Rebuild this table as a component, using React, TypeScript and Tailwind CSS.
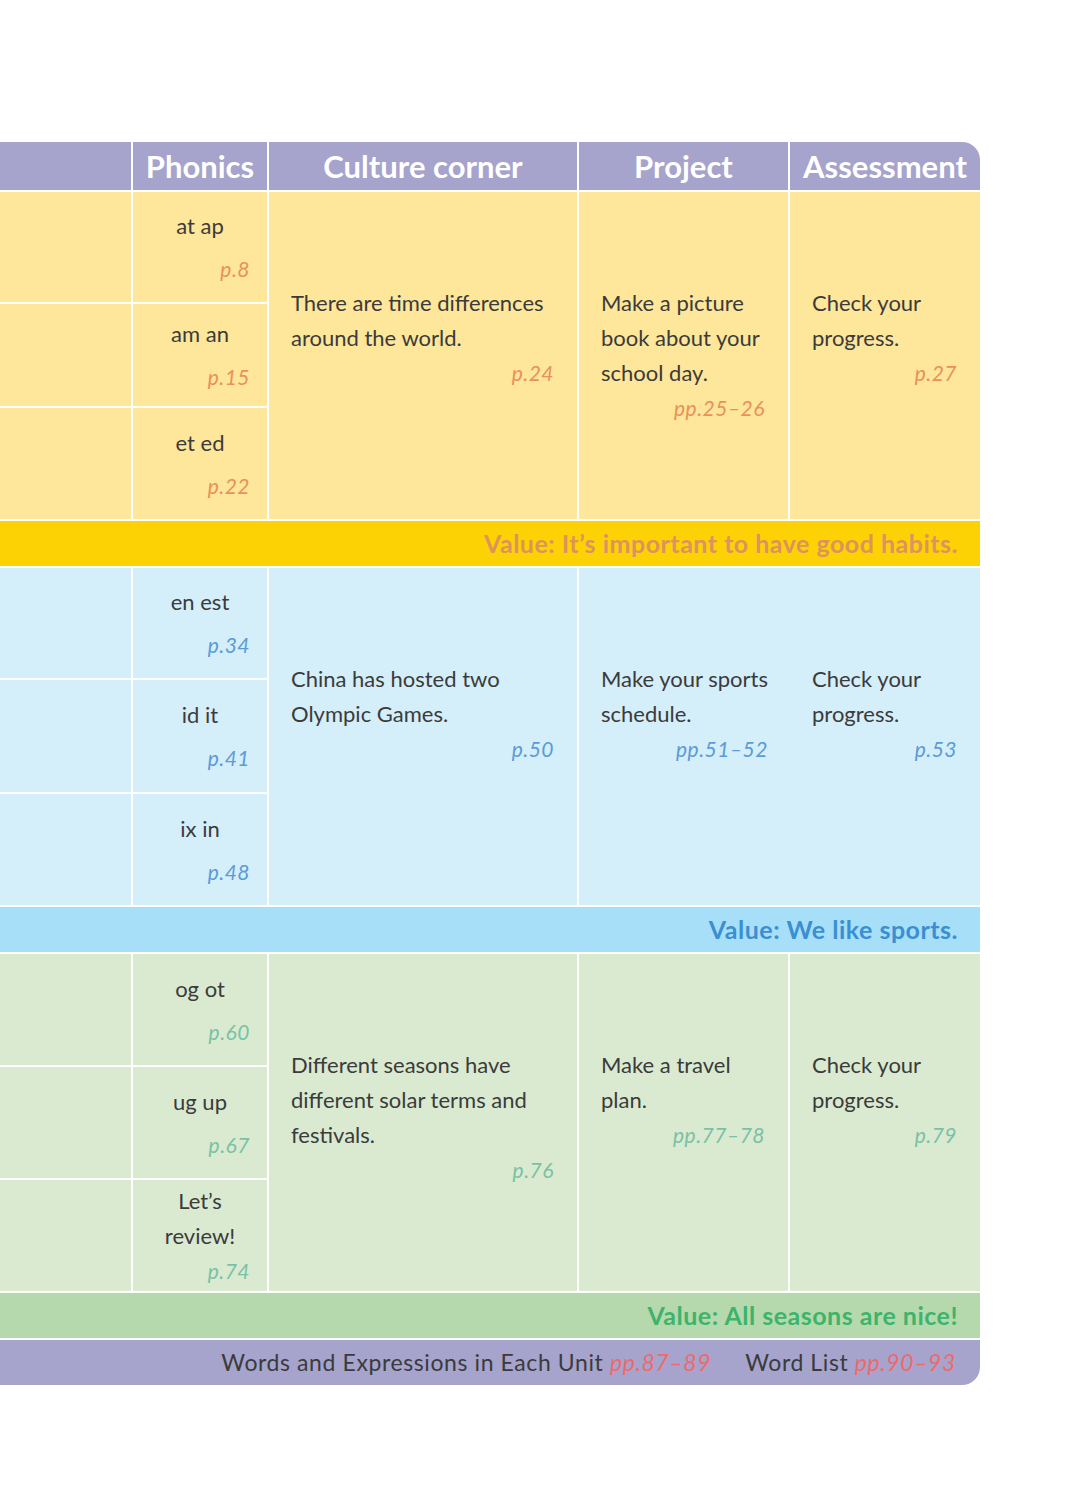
import React from 'react';

// Unit overview table: phonics, culture corner, project, assessment

type Phonic = { words: string[]; page: string };
type Block = { lines: string[]; page: string };

interface Section {
  cellBg: string;
  barBg: string;
  refColor: string;
  valueColor: string;
  rows: string;
  phonics: Phonic[];
  culture: Block;
  project: Block;
  assessment: Block;
  value: string;
}

const sections: Section[] = [
  {
    cellBg: 'bg-[#fee69a]',
    barBg: 'bg-[#fdd205]',
    refColor: 'text-[#e9915a]',
    valueColor: 'text-[#dc945c]',
    rows: 'grid-rows-[110px_102px_111px]',
    phonics: [
      { words: ['at ap'], page: 'p.8' },
      { words: ['am an'], page: 'p.15' },
      { words: ['et ed'], page: 'p.22' },
    ],
    culture: { lines: ['There are time differences', 'around the world.'], page: 'p.24' },
    project: { lines: ['Make a picture', 'book about your', 'school day.'], page: 'pp.25–26' },
    assessment: { lines: ['Check your', 'progress.'], page: 'p.27' },
    value: 'Value: It’s important to have good habits.',
  },
  {
    cellBg: 'bg-[#d4eefa]',
    barBg: 'bg-[#a8dff8]',
    refColor: 'text-[#5b9bd8]',
    valueColor: 'text-[#3a8fd2]',
    rows: 'grid-rows-[110px_112px_111px]',
    phonics: [
      { words: ['en est'], page: 'p.34' },
      { words: ['id it'], page: 'p.41' },
      { words: ['ix in'], page: 'p.48' },
    ],
    culture: { lines: ['China has hosted two', 'Olympic Games.'], page: 'p.50' },
    project: { lines: ['Make your sports', 'schedule.'], page: 'pp.51–52' },
    assessment: { lines: ['Check your', 'progress.'], page: 'p.53' },
    value: 'Value: We like sports.',
  },
  {
    cellBg: 'bg-[#d9ead1]',
    barBg: 'bg-[#b5d9ad]',
    refColor: 'text-[#79c1a5]',
    valueColor: 'text-[#3cb46c]',
    rows: 'grid-rows-[111px_111px_111px]',
    phonics: [
      { words: ['og ot'], page: 'p.60' },
      { words: ['ug up'], page: 'p.67' },
      { words: ['Let’s', 'review!'], page: 'p.74' },
    ],
    culture: {
      lines: ['Different seasons have', 'different solar terms and', 'festivals.'],
      page: 'p.76',
    },
    project: { lines: ['Make a travel', 'plan.'], page: 'pp.77–78' },
    assessment: { lines: ['Check your', 'progress.'], page: 'p.79' },
    value: 'Value: All seasons are nice!',
  },
];

const cols = 'grid grid-cols-[131px_134px_308px_209px_190px] gap-[2px]';
const refText = 'text-[21px] italic tracking-[0.5px]';

function TextCell({ block, bg, refColor }: { block: Block; bg: string; refColor: string }) {
  return (
    <div className={`${bg} row-span-3 pl-[22px] pr-[23px] pt-[93px] text-[22px] leading-[35px] text-[#3b3b3b]`}>
      {block.lines.map((l) => (
        <div key={l} className="whitespace-nowrap">
          {l}
        </div>
      ))}
      <div className={`text-right ${refText} ${refColor}`}>{block.page}</div>
    </div>
  );
}

export default function App() {
  return (
    <div className="min-h-screen bg-white pt-[142px] font-['Lato',sans-serif]">
      <div className="flex w-[980px] flex-col gap-[2px]">
        {/* Header */}
        <div className={`${cols} h-[48px]`}>
          <div className="bg-[#a6a3cc]" />
          {['Phonics', 'Culture corner', 'Project', 'Assessment'].map((h, i) => (
            <div
              key={h}
              className={`flex items-center justify-center bg-[#a6a3cc] text-[31px] font-bold text-white ${
                i === 3 ? 'rounded-tr-[18px]' : ''
              }`}
            >
              {h}
            </div>
          ))}
        </div>

        {sections.map((s) => (
          <React.Fragment key={s.value}>
            <div className={`${cols} ${s.rows}`}>
              {s.phonics.map((p, i) => (
                <React.Fragment key={p.page}>
                  <div className={`${s.cellBg} col-start-1`} style={{ gridRow: i + 1 }} />
                  <div
                    className={`${s.cellBg} col-start-2 flex flex-col justify-center text-[22px] leading-[35px] text-[#3b3b3b]`}
                    style={{ gridRow: i + 1 }}
                  >
                    {p.words.map((w) => (
                      <div key={w} className="text-center">
                        {w}
                      </div>
                    ))}
                    <div
                      className={`pr-[17px] text-right ${refText} ${s.refColor} ${
                        p.words.length === 1 ? 'mt-[8px]' : ''
                      }`}
                    >
                      {p.page}
                    </div>
                  </div>
                </React.Fragment>
              ))}
              <div className="col-start-3 row-span-3 row-start-1 grid">
                <TextCell block={s.culture} bg={s.cellBg} refColor={s.refColor} />
              </div>
              <div className="col-start-4 row-span-3 row-start-1 grid">
                <TextCell block={s.project} bg={s.cellBg} refColor={s.refColor} />
              </div>
              <div className="col-start-5 row-span-3 row-start-1 grid">
                <TextCell block={s.assessment} bg={s.cellBg} refColor={s.refColor} />
              </div>
            </div>
            <div
              className={`${s.barBg} flex h-[45px] items-center justify-end pr-[22px] text-[25px] font-bold tracking-[0.5px] ${s.valueColor}`}
            >
              {s.value}
            </div>
          </React.Fragment>
        ))}

        {/* Footer */}
        <div className="flex h-[45px] items-center justify-end gap-[34px] rounded-br-[18px] bg-[#a6a3cc] pr-[24px] text-[23px] tracking-[0.6px] text-[#3b3b3b]">
          <span>
            Words and Expressions in Each Unit <span className="italic text-[#ee6a6a]">pp.87–89</span>
          </span>
          <span>
            Word List <span className="italic text-[#ee6a6a]">pp.90–93</span>
          </span>
        </div>
      </div>
    </div>
  );
}
